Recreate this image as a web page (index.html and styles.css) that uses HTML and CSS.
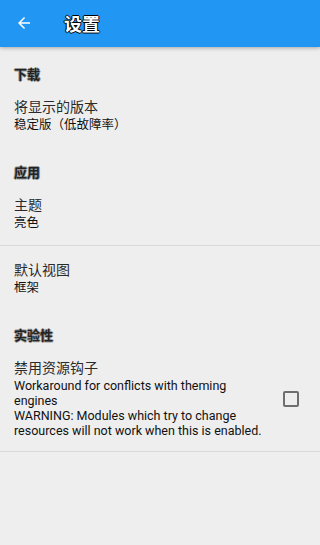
FILE: index.html
```html
<!DOCTYPE html>
<html lang="zh-CN">
<head>
    <meta charset="UTF-8">
    <meta name="viewport" content="width=device-width, initial-scale=1.0">
    <title>设置</title>
    <link rel="stylesheet" href="styles.css">
</head>
<body>

<div class="toolbar">
    <svg class="back" width="18" height="18" viewBox="0 0 24 24">
        <path d="M20 11H7.83l5.59-5.59L12 4l-8 8 8 8 1.41-1.41L7.83 13H20v-2z" fill="#fff"/>
    </svg>
    <h1>设置</h1>
</div>

<!-- 下载 -->
<div class="category first">下载</div>
<div class="pref">
    <div class="pref-text">
        <div class="pref-title">将显示的版本</div>
        <div class="pref-summary">稳定版（低故障率）</div>
    </div>
</div>

<!-- 应用 -->
<div class="category">应用</div>
<div class="pref divided">
    <div class="pref-text">
        <div class="pref-title">主题</div>
        <div class="pref-summary">亮色</div>
    </div>
</div>
<div class="pref">
    <div class="pref-text">
        <div class="pref-title">默认视图</div>
        <div class="pref-summary">框架</div>
    </div>
</div>

<!-- 实验性 -->
<div class="category">实验性</div>
<div class="pref divided last">
    <div class="pref-text narrow">
        <div class="pref-title">禁用资源钩子</div>
        <div class="pref-summary">Workaround for conflicts with theming engines<br>WARNING: Modules which try to change resources will not work when this is enabled.</div>
    </div>
    <span class="checkbox"></span>
</div>

</body>
</html>
```

FILE: styles.css
```css
body {
    margin: 0;
    background-color: #eeeeee;
    font-family: Roboto, "Noto Sans CJK SC", sans-serif;
    color: #212121;
}
.toolbar {
    height: 47px;
    background-color: #2196f3;
    display: flex;
    align-items: center;
    box-shadow: 0 1px 4px rgba(0, 0, 0, 0.3);
    position: relative;
}
.back {
    margin-left: 15px;
    margin-bottom: 1px;
}
.toolbar h1 {
    margin: 0 0 2px 31px;
    font-size: 18px;
    font-weight: bold;
    color: #fff;
    text-shadow: 1px 0 0 #000, -1px 0 0 #000, 0 1px 0 #000, 0 -1px 0 #000;
}
.category {
    padding: 18px 14px 0;
    height: 16px;
    line-height: 16px;
    font-size: 13px;
    font-weight: bold;
    color: #222;
    text-shadow: 1px 0 0 #999, -1px 0 0 #999, 0 1px 0 #999, 0 -1px 0 #999;
}
.category.first {
    padding-top: 20px;
}
.pref {
    display: flex;
    align-items: center;
    padding: 14px 21px 15px 14px;
}
.pref.divided {
    border-bottom: 1px solid #d8d8d8;
}
.pref.last {
    padding-bottom: 13px;
}
.pref-text {
    flex: 1;
}
.pref-text.narrow {
    padding-right: 18px;
}
.pref-title {
    font-size: 14px;
    line-height: 20px;
    color: #2a2a2a;
}
.pref-summary {
    font-size: 12.5px;
    line-height: 15px;
    color: #111;
}
.checkbox {
    width: 12px;
    height: 12px;
    border: 2px solid #6e6e6e;
    border-radius: 2px;
    margin-top: 2px;
}
```
